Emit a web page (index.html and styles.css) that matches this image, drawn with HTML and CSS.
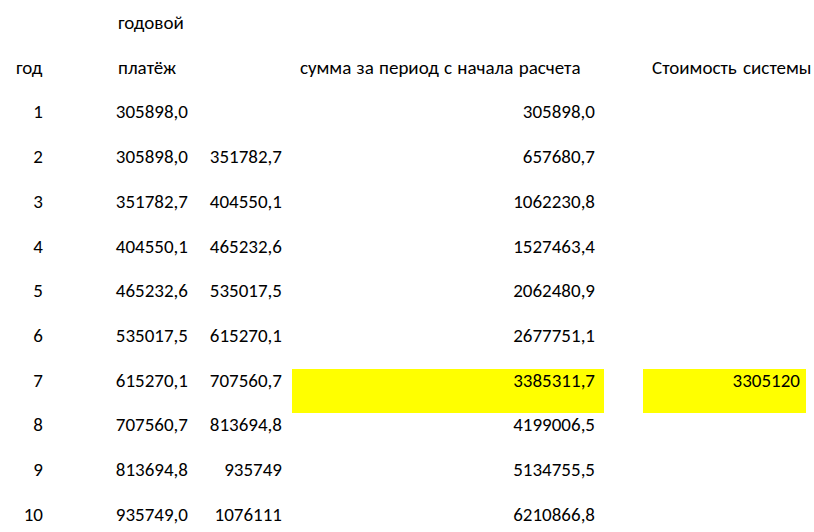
FILE: index.html
```html
<!DOCTYPE html>
<html lang="ru">
<head>
<meta charset="utf-8">
<title>Расчет</title>
<link rel="stylesheet" href="styles.css">
</head>
<body>
<div class="sheet">
  <div class="c"></div><div class="c hb">годовой</div><div class="c"></div><div class="c"></div><div class="c"></div><div class="c"></div>
  <div class="c ha">год</div><div class="c hb">платёж</div><div class="c"></div><div class="c hd">сумма за период с начала расчета</div><div class="c"></div><div class="c hf">Стоимость системы</div>

  <div class="c a">1</div><div class="c b">305898,0</div><div class="c cc"></div><div class="c d">305898,0</div><div class="c"></div><div class="c"></div>
  <div class="c a">2</div><div class="c b">305898,0</div><div class="c cc">351782,7</div><div class="c d">657680,7</div><div class="c"></div><div class="c"></div>
  <div class="c a">3</div><div class="c b">351782,7</div><div class="c cc">404550,1</div><div class="c d">1062230,8</div><div class="c"></div><div class="c"></div>
  <div class="c a">4</div><div class="c b">404550,1</div><div class="c cc">465232,6</div><div class="c d">1527463,4</div><div class="c"></div><div class="c"></div>
  <div class="c a">5</div><div class="c b">465232,6</div><div class="c cc">535017,5</div><div class="c d">2062480,9</div><div class="c"></div><div class="c"></div>
  <div class="c a">6</div><div class="c b">535017,5</div><div class="c cc">615270,1</div><div class="c d">2677751,1</div><div class="c"></div><div class="c"></div>
  <div class="c a">7</div><div class="c b">615270,1</div><div class="c cc">707560,7</div><div class="c d hl">3385311,7</div><div class="c"></div><div class="c f hl">3305120</div>
  <div class="c a">8</div><div class="c b">707560,7</div><div class="c cc">813694,8</div><div class="c d">4199006,5</div><div class="c"></div><div class="c"></div>
  <div class="c a">9</div><div class="c b">813694,8</div><div class="c cc">935749</div><div class="c d">5134755,5</div><div class="c"></div><div class="c"></div>
  <div class="c a">10</div><div class="c b">935749,0</div><div class="c cc">1076111</div><div class="c d">6210866,8</div><div class="c"></div><div class="c"></div>
</div>
</body>
</html>
```
FILE: styles.css
```css
html, body {
  margin: 0;
  padding: 0;
  background: #ffffff;
}
body {
  font-family: Carlito, Calibri, Lato, "Liberation Sans", sans-serif;
  font-size: 19px;
  color: #000000;
}
.sheet {
  display: grid;
  grid-template-columns: 47px 145px 100px 312px 39px 163px;
  grid-auto-rows: 44.73px;
  padding-top: 11px;
}
.c {
  white-space: nowrap;
  line-height: 23px;
  overflow: visible;
}
.a { text-align: right; padding-right: 4px; }
.b { text-align: right; padding-right: 4px; }
.cc { text-align: right; padding-right: 10px; }
.d { text-align: right; padding-right: 9px; }
.f { text-align: right; padding-right: 6px; }
.ha { padding-left: 16px; }
.hb { padding-left: 71px; }
.hd { padding-left: 8px; word-spacing: 1px; }
.hf { padding-left: 9px; word-spacing: 2px; }
.hl { background: #ffff00; }
```
